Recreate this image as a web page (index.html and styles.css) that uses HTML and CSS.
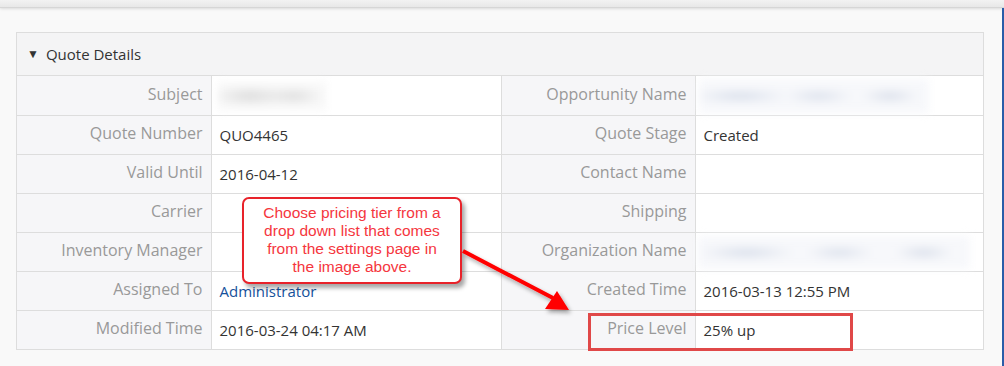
FILE: index.html
```html
<!DOCTYPE html>
<html lang="en">
<head>
  <meta charset="UTF-8" />
  <title>Quote Details</title>
  <link rel="stylesheet" href="styles.css">
</head>
<body>
  <div class="topbar"></div>
  <div class="page">
    <div class="block">
      <div class="block-head"><span class="caret">&#9660;</span>Quote Details</div>
      <table class="details">
        <colgroup>
          <col class="c-label1"><col class="c-value1"><col class="c-label2"><col class="c-value2">
        </colgroup>
        <tr>
          <td class="label">Subject</td>
          <td class="value"><div class="blurred gray b-subject"></div></td>
          <td class="label">Opportunity Name</td>
          <td class="value"><div class="blurred blue b-opp"></div></td>
        </tr>
        <tr>
          <td class="label">Quote Number</td>
          <td class="value">QUO4465</td>
          <td class="label">Quote Stage</td>
          <td class="value">Created</td>
        </tr>
        <tr>
          <td class="label">Valid Until</td>
          <td class="value">2016-04-12</td>
          <td class="label">Contact Name</td>
          <td class="value"></td>
        </tr>
        <tr>
          <td class="label">Carrier</td>
          <td class="value"></td>
          <td class="label">Shipping</td>
          <td class="value"></td>
        </tr>
        <tr>
          <td class="label">Inventory Manager</td>
          <td class="value"></td>
          <td class="label">Organization Name</td>
          <td class="value"><div class="blurred blue b-org"></div></td>
        </tr>
        <tr>
          <td class="label">Assigned To</td>
          <td class="value"><a class="link">Administrator</a></td>
          <td class="label">Created Time</td>
          <td class="value">2016-03-13 12:55 PM</td>
        </tr>
        <tr>
          <td class="label">Modified Time</td>
          <td class="value">2016-03-24 04:17 AM</td>
          <td class="label">Price Level</td>
          <td class="value">25% up</td>
        </tr>
      </table>
    </div>
  </div>

  <div class="callout">Choose pricing tier from a drop down list that comes from the settings page in the image above.</div>
  <svg class="arrow" width="1004" height="366" viewBox="0 0 1004 366">
    <defs>
      <filter id="sh" x="-20%" y="-20%" width="140%" height="140%">
        <feDropShadow dx="2" dy="3" stdDeviation="2" flood-color="#000" flood-opacity="0.35"/>
      </filter>
    </defs>
    <g filter="url(#sh)">
      <line x1="463" y1="251" x2="553" y2="298" stroke="#f00" stroke-width="4"/>
      <polygon points="557,291 545,309 569,310" fill="#f00"/>
    </g>
  </svg>
  <div class="highlight"></div>
</body>
</html>
```
FILE: styles.css
```css
body {
  margin: 0;
  background: #f9f9f9;
  font-family: "Open Sans", sans-serif;
  font-size: 15px;
  color: #333;
  width: 1004px;
  height: 366px;
  overflow: hidden;
  position: relative;
}
.topbar {
  height: 7px;
  background: linear-gradient(#f2f2f2, #e8e8e8);
  border-bottom: 1px solid #d6d6d6;
  box-shadow: 0 1px 3px rgba(0, 0, 0, 0.12);
}
.page {
  padding: 24px 20px 0 16px;
  border-right: 2px solid #2a5ca8;
  height: 358px;
  box-sizing: border-box;
}
.block {
  width: 968px;
  border: 1px solid #ddd;
  box-sizing: border-box;
}
.block-head {
  height: 42px;
  line-height: 43px;
  background: #f4f4f5;
  padding-left: 10px;
  font-size: 15px;
  color: #333;
  border-bottom: 1px solid #ddd;
}
.caret {
  font-size: 12px;
  margin-right: 7px;
  position: relative;
  top: -2px;
}
.details {
  border-collapse: collapse;
  width: 966px;
  table-layout: fixed;
}
.c-label1 { width: 194px; }
.c-value1 { width: 290px; }
.c-label2 { width: 194px; }
.c-value2 { width: 288px; }
.details td {
  height: 39px;
  box-sizing: border-box;
  border-top: 1px solid #ddd;
  border-left: 1px solid #ddd;
  padding: 0 8px;
  line-height: 20px;
  white-space: nowrap;
}
.details tr:first-child td { border-top: none; }
.details td:first-child { border-left: none; }
.label {
  background: #f6f6f8;
  color: #999;
  font-size: 16px;
  text-align: right;
  padding-bottom: 3px !important;
}
.value {
  background: #fff;
  padding-top: 1px !important;
}
.link {
  color: #15519b;
}
.blurred {
  height: 28px;
  filter: blur(4px);
}
.gray {
  background: radial-gradient(ellipse 40px 9px at 30% 50%, #d8d8d8, transparent),
              radial-gradient(ellipse 30px 8px at 70% 50%, #dadada, transparent),
              #f8f8f8;
}
.blue {
  background: radial-gradient(ellipse 50px 7px at 18% 50%, #d4dbe8, transparent),
              radial-gradient(ellipse 35px 7px at 52% 50%, #d8deea, transparent),
              radial-gradient(ellipse 30px 7px at 83% 50%, #d6dce8, transparent),
              #f7f8fb;
}
.b-subject { width: 108px; margin-left: -2px; }
.b-opp { width: 230px; margin-left: -5px; height: 34px; }
.b-org { width: 272px; margin-left: -6px; height: 33px; }
.callout {
  position: absolute;
  left: 242px;
  top: 197px;
  width: 220px;
  height: 87px;
  box-sizing: border-box;
  border: 2px solid #e8222a;
  border-radius: 7px;
  background: #fff;
  box-shadow: 3px 4px 4px rgba(0, 0, 0, 0.35);
  color: #f5363e;
  font-family: "Liberation Sans", Arial, sans-serif;
  font-size: 15.5px;
  line-height: 18px;
  text-align: center;
  padding: 5px 13px 0;
}
.arrow {
  position: absolute;
  left: 0;
  top: 0;
  pointer-events: none;
}
.highlight {
  position: absolute;
  left: 588px;
  top: 313px;
  width: 265px;
  height: 38px;
  box-sizing: border-box;
  border: 3px solid #e04848;
}
```
